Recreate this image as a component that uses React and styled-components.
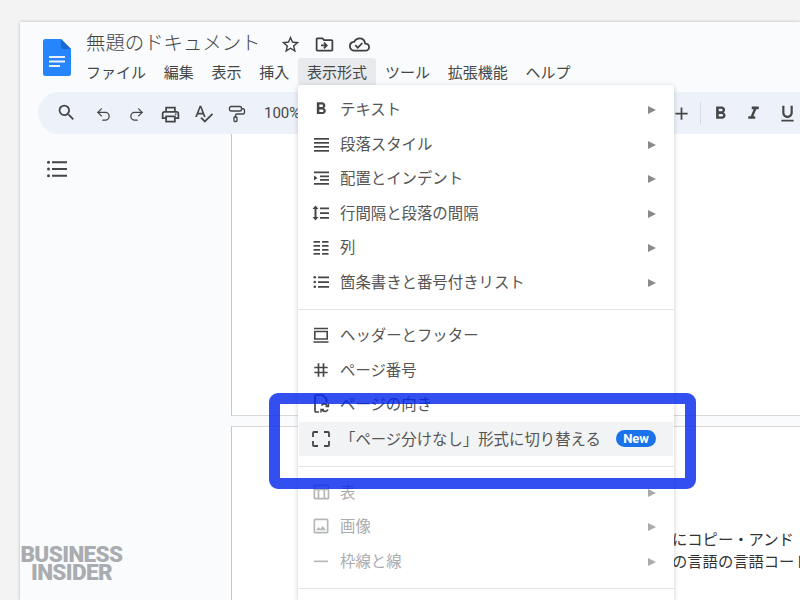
import React from 'react';
import styled, { createGlobalStyle } from 'styled-components';
import {
  MdSearch, MdOutlinePrint, MdSpellcheck, MdStarBorder, MdOutlineDriveFileMove, MdOutlineCloudDone,
  MdFormatBold, MdFormatItalic, MdFormatUnderlined, MdAdd, MdTag, MdOutlineImage, MdOutlineTableChart,
} from 'react-icons/md';
import { Undo2, Redo2, PaintRoller } from 'lucide-react';

const Global = createGlobalStyle`
  html, body {
    margin: 0;
    height: 600px;
    overflow: hidden;
    background: #f3f3f3;
    font-family: "Noto Sans CJK JP", "Noto Sans", sans-serif;
  }
`;

const Screen = styled.div`
  position: relative;
  width: 800px;
  height: 600px;
  padding: 22px 0 0 20px;
  box-sizing: border-box;
  overflow: hidden;
`;

const Win = styled.div`
  height: 578px;
  background: #f9fbfd;
  box-shadow: 0 0 3px rgba(0, 0, 0, 0.25);
  overflow: hidden;
`;

const Header = styled.header`
  display: flex;
  height: 70px;
  padding: 17px 0 0 23px;
  box-sizing: border-box;
`;

const Titles = styled.div`
  margin-left: 15px;
  margin-top: -10px;
`;

const TitleRow = styled.div`
  display: flex;
  align-items: center;
  height: 26px;
`;

const Title = styled.div`
  font-size: 19.4px;
  font-weight: 300;
  line-height: 26px;
  color: #444;
  white-space: nowrap;
`;

const TitleIcons = styled.div`
  display: flex;
  align-items: center;
  gap: 13.5px;
  margin-left: 19px;
  margin-top: 5px;
  color: #3c4043;
  font-size: 21px;
  svg { display: block; }
`;

const MenuBar = styled.nav`
  display: flex;
  margin: 3px 0 0 -9px;
`;

const MenuItem = styled.div`
  height: 27px;
  line-height: 27px;
  padding: 0 8.900px;
  font-size: 15px;
  color: #444746;
  white-space: nowrap;
  background: ${(p) => (p.$active ? '#e8eaed' : 'transparent')};
  border-radius: 3px 3px 0 0;
`;

const Toolbar = styled.div`
  display: flex;
  justify-content: space-between;
  align-items: center;
  height: 42px;
  margin: 0 -24px 0 18px;
  padding: 0 20px 0 15px;
  background: #edf2fa;
  border-radius: 21px;
  color: #444746;
`;

const ToolGroup = styled.div`
  display: flex;
  align-items: center;
  svg { display: block; }
`;

const Tool = styled.div`
  display: flex;
  align-items: center;
  justify-content: center;
  width: 33.500px;
  height: 24px;
  font-size: 21px;
  margin-top: ${(p) => p.$top || 0}px;
  margin-left: ${(p) => p.$shift || 0}px;
  margin-right: ${(p) => -(p.$shift || 0)}px;
`;

const Zoom = styled.div`
  margin-left: 10px;
  font-family: "Roboto", "Liberation Sans", sans-serif;
  font-size: 15px;
  color: #444746;
`;

const Divider = styled.div`
  width: 1px;
  height: 22px;
  margin: 0 3px 0 1px;
  background: #d5dae2;
`;

const Main = styled.main`
  display: flex;
  height: 466px;
`;

const Sidebar = styled.aside`
  flex: none;
  width: 211px;
  padding: 26px 0 0 27px;
  box-sizing: border-box;
  color: #444746;
  svg { display: block; }
`;

const Pages = styled.div`
  flex: 1;
  min-width: 0;
  display: flex;
  flex-direction: column;
  gap: 10px;
`;

const Sheet = styled.section`
  background: #fff;
  border-left: 1px solid #c7c7c7;
  overflow: hidden;
  box-sizing: border-box;
  ${(p) => (p.$first ? 'height: 282px; border-bottom: 1px solid #d6d8db;' : 'flex: 1; border-top: 1px solid #d6d8db;')}
`;

const SheetText = styled.div`
  padding: 100px 0 0 440px;
  font-size: 15.300px;
  line-height: 22px;
  color: #333;
  white-space: nowrap;
`;

const Menu = styled.div`
  position: absolute;
  left: 298px;
  top: 85px;
  width: 376px;
  height: 515px;
  padding-top: 7px;
  box-sizing: border-box;
  background: #fff;
  border-radius: 4px 4px 0 0;
  box-shadow: 0 1px 5px rgba(60, 64, 67, 0.25);
`;

const Row = styled.div`
  display: flex;
  align-items: center;
  height: 34.500px;
  margin: 0 1px;
  padding: 0 17px 0 12px;
  font-size: 15.400px;
  color: ${(p) => (p.$off ? '#a9acaf' : '#555')};
  background: ${(p) => (p.$hot ? '#f1f3f4' : 'transparent')};
`;

const RowIcon = styled.div`
  flex: none;
  display: flex;
  align-items: center;
  justify-content: center;
  width: 20px;
  height: 20px;
  margin-right: 9px;
  font-size: ${(p) => p.$size || 20}px;
  color: ${(p) => (p.$off ? '#b4b7ba' : '#444746')};
  svg { display: block; }
`;

const RowLabel = styled.div`
  flex: 1;
  margin-top: -2px;
  white-space: nowrap;
`;

const Arrow = styled.div`
  width: 0;
  height: 0;
  margin-top: 2px;
  border-left: 8px solid ${(p) => (p.$off ? '#a9acaf' : '#8a8a8a')};
  border-top: 4.500px solid transparent;
  border-bottom: 4.500px solid transparent;
`;

const NewBadge = styled.div`
  width: 40px;
  height: 17px;
  border-radius: 9px;
  background: #1a73e8;
  color: #fff;
  font-family: "Roboto", "Liberation Sans", sans-serif;
  font-size: 13px;
  font-weight: 700;
  line-height: 17px;
  text-align: center;
`;

const Sep = styled.div`
  height: 1px;
  margin: ${(p) => p.$top}px 0 ${(p) => p.$bottom}px;
  background: #e3e5e8;
`;

const Callout = styled.div`
  position: absolute;
  left: 269px;
  top: 393px;
  width: 427px;
  height: 96px;
  box-sizing: border-box;
  border: 11.500px solid rgba(0, 35, 236, 0.8);
  border-radius: 9px;
`;

const Watermark = styled.div`
  position: absolute;
  left: 20px;
  top: 545px;
  width: 103px;
  font-family: "Roboto", "Liberation Sans", sans-serif;
  font-size: 22.500px;
  font-weight: 900;
  line-height: 18px;
  letter-spacing: -0.600px;
  text-align: center;
  white-space: nowrap;
  color: #a9acb0;
`;

const DocLogo = () => (
  <svg width="28" height="37" viewBox="0 0 28 37">
    <path d="M2.500 0H18l10 10v24.500a2.500 2.500 0 0 1-2.500 2.500h-23A2.500 2.500 0 0 1 0 34.500v-32A2.500 2.500 0 0 1 2.500 0z" fill="#2684fc" />
    <path d="M18 0l10 10h-7.500A2.500 2.500 0 0 1 18 7.500z" fill="#1967d2" />
    <path d="M6 17h16v2H6zM6 21.500h16v2H6zM6 26h11v2H6z" fill="#e8f0fe" />
  </svg>
);

const Lines = ({ rows }) => (
  <svg width="20" height="20" viewBox="0 0 20 20" fill="currentColor">
    {rows.map((r) => <rect key={r.join()} x={r[0]} y={r[1]} width={r[2]} height={r[3] || 1.700} />)}
  </svg>
);

const icons = {
  para: <Lines rows={[[3, 4, 15], [3, 8, 15], [3, 12, 15], [3, 16, 15]]} />,
  indent: (
    <svg width="20" height="20" viewBox="0 0 20 20" fill="currentColor">
      <path d="M3 3.500h15v1.700H3zM9 7.500h9v1.700H9zM9 11h9v1.700H9zM3 15h15v1.700H3zM3 7.500l3.500 2.500L3 12.500z" />
    </svg>
  ),
  spacing: (
    <svg width="20" height="20" viewBox="0 0 20 20" fill="currentColor">
      <path d="M9 4.500h9v1.700H9zM9 9.200h9v1.700H9zM9 14h9v1.700H9zM4.500 2.500L7.500 6H5.500v8h2l-3 3.500-3-3.500h2V6h-2z" />
    </svg>
  ),
  columns: (
    <Lines rows={[
      [2.500, 4, 6.500], [2.500, 8, 6.500], [2.500, 12, 6.500], [2.500, 16, 6.500],
      [11, 4, 6.500], [11, 8, 6.500], [11, 12, 6.500], [11, 16, 6.500],
    ]} />
  ),
  bullets: (
    <svg width="20" height="20" viewBox="0 0 20 20" fill="currentColor">
      <path d="M7 4.500h11v1.700H7zM7 9.200h11v1.700H7zM7 14h11v1.700H7z" />
      <circle cx="3.800" cy="5.300" r="1.300" /><circle cx="3.800" cy="10" r="1.300" /><circle cx="3.800" cy="14.800" r="1.300" />
    </svg>
  ),
  header: (
    <svg width="20" height="20" viewBox="0 0 20 20" fill="none" stroke="currentColor" strokeWidth="1.600">
      <path d="M3 3.500h14M3.800 6.500h12.400v7.500H3.800zM2.500 17h15" />
    </svg>
  ),
  orient: (
    <svg width="20" height="20" viewBox="0 0 20 20" fill="none" stroke="currentColor" strokeWidth="1.700">
      <path d="M8 18H5a1 1 0 0 1-1-1V2a1 1 0 0 1 1-1h6.500l4 4v3.500" />
      <path d="M10.500 11.500a3.500 3.500 0 0 1 6 .3M17 15.500a3.500 3.500 0 0 1-6 .5" />
      <path d="M17.500 9.500v3h-3M10 18.500v-3h3" strokeWidth="1.400" />
    </svg>
  ),
  pageless: (
    <svg width="20" height="20" viewBox="0 0 20 20" fill="none" stroke="currentColor" strokeWidth="1.800">
      <path d="M7 3H3a1 1 0 0 0-1 1v4M13 3h4a1 1 0 0 1 1 1v4M7 17H3a1 1 0 0 1-1-1v-4M13 17h4a1 1 0 0 0 1-1v-4" />
    </svg>
  ),
  dash: <Lines rows={[[3, 9.500, 14]]} />,
};

const OutlineIcon = () => (
  <svg width="20" height="18" viewBox="0 0 20 18" fill="currentColor">
    <path d="M5 1.200h15v2H5zM5 8h15v2H5zM5 14.800h15v2H5z" />
    <circle cx="1.500" cy="2.200" r="1.500" /><circle cx="1.500" cy="9" r="1.500" /><circle cx="1.500" cy="15.800" r="1.500" />
  </svg>
);

const menuBar = ['ファイル', '編集', '表示', '挿入', '表示形式', 'ツール', '拡張機能', 'ヘルプ'];

const Item = ({ icon, size, label, sub, hot, off, badge }) => (
  <Row $hot={hot} $off={off}>
    <RowIcon $off={off} $size={size}>{icon}</RowIcon>
    <RowLabel>{label}</RowLabel>
    {badge && <NewBadge>New</NewBadge>}
    {sub && <Arrow $off={off} />}
  </Row>
);

export default function App() {
  return (
    <Screen>
      <Global />
      <Win>
        <Header>
          <DocLogo />
          <Titles>
            <TitleRow>
              <Title>無題のドキュメント</Title>
              <TitleIcons>
                <MdStarBorder />
                <MdOutlineDriveFileMove />
                <MdOutlineCloudDone />
              </TitleIcons>
            </TitleRow>
            <MenuBar>
              {menuBar.map((m) => <MenuItem key={m} $active={m === '表示形式'}>{m}</MenuItem>)}
            </MenuBar>
          </Titles>
        </Header>
        <Toolbar>
          <ToolGroup>
            <Tool $shift={-3} $top={-2}><MdSearch /></Tool>
            <Tool $top={3}><Undo2 size={17} strokeWidth={1.800} /></Tool>
            <Tool $top={3}><Redo2 size={17} strokeWidth={1.800} /></Tool>
            <Tool $top={2}><MdOutlinePrint /></Tool>
            <Tool><MdSpellcheck /></Tool>
            <Tool $top={1}><PaintRoller size={18} strokeWidth={1.800} /></Tool>
            <Zoom>100%</Zoom>
          </ToolGroup>
          <ToolGroup>
            <Tool><MdAdd /></Tool>
            <Divider />
            <Tool><MdFormatBold /></Tool>
            <Tool><MdFormatItalic /></Tool>
            <Tool><MdFormatUnderlined /></Tool>
          </ToolGroup>
        </Toolbar>
        <Main>
          <Sidebar><OutlineIcon /></Sidebar>
          <Pages>
            <Sheet $first />
            <Sheet>
              <SheetText>
                にコピー・アンド<br />
                の言語の言語コード
              </SheetText>
            </Sheet>
          </Pages>
        </Main>
      </Win>

      <Menu>
        <Item icon={<MdFormatBold />} size={24} label="テキスト" sub />
        <Item icon={icons.para} label="段落スタイル" sub />
        <Item icon={icons.indent} label="配置とインデント" sub />
        <Item icon={icons.spacing} label="行間隔と段落の間隔" sub />
        <Item icon={icons.columns} label="列" sub />
        <Item icon={icons.bullets} label="箇条書きと番号付きリスト" sub />
        <Sep $top={10} $bottom={8} />
        <Item icon={icons.header} label="ヘッダーとフッター" />
        <Item icon={<MdTag />} size={22} label="ページ番号" />
        <Item icon={icons.orient} label="ページの向き" />
        <Item icon={icons.pageless} label="「ページ分けなし」形式に切り替える" hot badge />
        <Sep $top={9.500} $bottom={8} />
        <Item icon={<MdOutlineTableChart />} label="表" sub off />
        <Item icon={<MdOutlineImage />} label="画像" sub off />
        <Item icon={icons.dash} label="枠線と線" sub off />
        <Sep $top={10} $bottom={0} />
      </Menu>

      <Callout />
      <Watermark>BUSINESS<br />INSIDER</Watermark>
    </Screen>
  );
}
